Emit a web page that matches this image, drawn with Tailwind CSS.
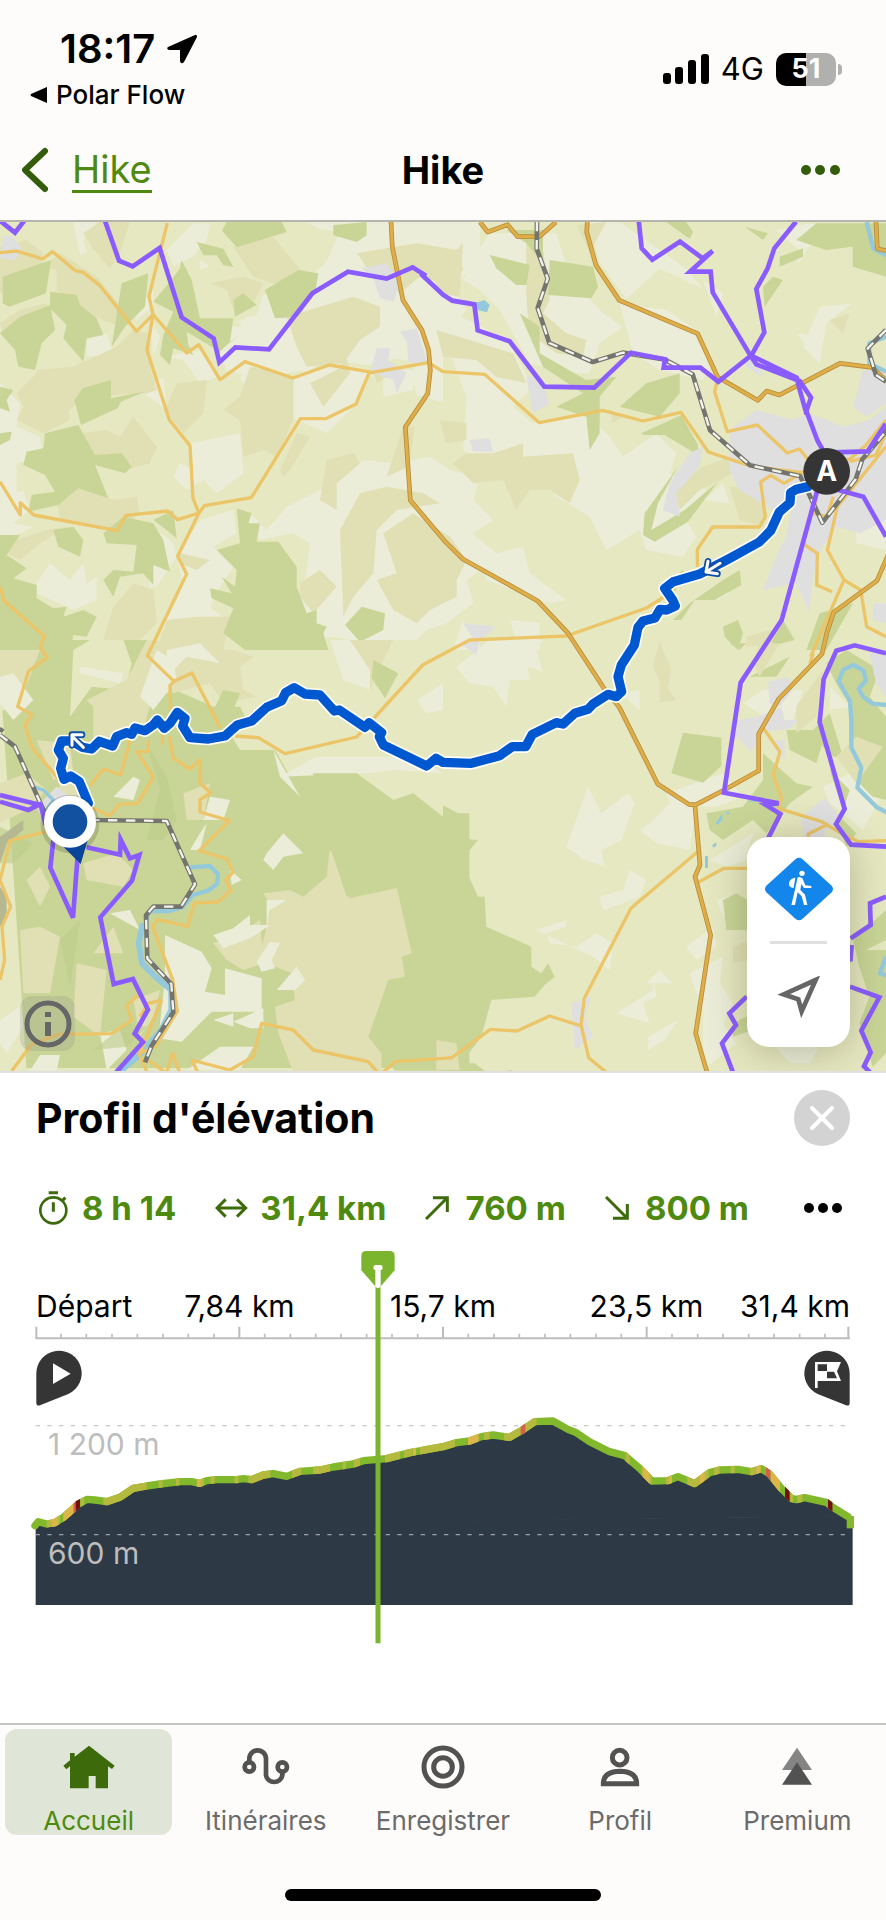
<!DOCTYPE html>
<html lang="fr">
<head>
    <meta charset="UTF-8">
    <meta name="viewport" content="width=device-width, initial-scale=1.0">
    <title>Hike</title>
    <script src="https://cdn.jsdelivr.net/npm/@tailwindcss/browser@4"></script>
</head>
<body class="bg-[#fdfcfa] font-['Inter',sans-serif] text-black">
<div class="flex min-h-screen flex-col">

    <!-- Status bar -->
    <div class="flex h-[120px] items-start justify-between pr-[44px] pl-[30px] pt-[26px]">
        <div>
            <div class="flex items-center gap-3 pl-[30px] text-[40px] leading-[46px] font-semibold">
                <span>18:17</span>
                <svg class="h-[30px] w-[30px]" viewBox="0 0 30 30"><path d="M28 1 1 13q-2 2 1 3h11v11q1 4 4 1L30 3q0-3-2-2z"/></svg>
            </div>
            <a href="#" class="flex items-center gap-2 text-[26px] leading-[46px] font-medium">
                <svg class="h-[18px] w-[18px]" viewBox="0 0 18 18"><path d="M17 1v16L1 10q-1-1 0-2z"/></svg>
                Polar Flow
            </a>
        </div>
        <div class="flex items-center gap-3 pt-[20px]">
            <svg class="h-[30px] w-[46px]" viewBox="0 0 46 30"><rect y="19" width="8" height="11" rx="3"/><rect x="12" y="13" width="8" height="17" rx="3"/><rect x="25" y="6" width="8" height="24" rx="3"/><rect x="38" width="8" height="30" rx="3"/></svg>
            <span class="text-[31px] leading-[46px]">4G</span>
            <div class="flex items-center gap-[2px]">
                <div class="flex h-[33px] w-[60px] items-center justify-center rounded-[10px] bg-linear-to-r from-black from-50% to-[#b0b0ae] to-50% text-[27px] font-bold text-white">51</div>
                <div class="h-[11px] w-[4px] rounded-r-full bg-[#b0b0ae]"></div>
            </div>
        </div>
    </div>

    <!-- Navigation bar -->
    <header class="grid h-[102px] grid-cols-3 items-center border-b-2 border-[#b5b5b0] px-[22px]">
        <a href="#" class="flex items-center gap-[23px] text-[38px] leading-[42px] text-[#4f8a10]">
            <svg class="h-[46px] w-[27px]" viewBox="0 0 27 46" fill="none" stroke="#335c0b" stroke-width="6" stroke-linecap="round" stroke-linejoin="round"><path d="M23 4 3 23l20 19"/></svg>
            <span class="border-b-3 border-[#4f8a10]">Hike</span>
        </a>
        <h1 class="text-center text-[38px] font-bold">Hike</h1>
        <button type="button" aria-label="Plus" class="justify-self-end pr-6">
            <svg class="h-[10px] w-[39px]" viewBox="0 0 39 10" fill="#335c0b"><circle cx="5" cy="5" r="5"/><circle cx="19" cy="5" r="5"/><circle cx="34" cy="5" r="5"/></svg>
        </button>
    </header>

    <!-- Map -->
    <div class="relative min-h-[640px] flex-1 overflow-hidden bg-[#e6e8c1]">
        <svg class="absolute inset-0 h-full w-full" viewBox="0 6 2658 2547" preserveAspectRatio="xMidYMid slice">
            <!-- Land cover, north west -->
            <g>
                <g fill="#ebedd8">
                    <path d="M840 6h600l0 100-80 100 40 60-71 100 0 60 0 120-80-20-10-60 10-40-60-10-90 20-120-20-60 40-50-30-70-30-30-70-60-20 60-20 20-60 100-20 90-80 40-90-60-10-80-40z"/>
                    <path d="M220 6h70l-40 50 10 40-20 10z M500 90l80-80 50 0-10 50-40 50-60 30z M600 120l30 20-30 10z M640 350l20-30h60l20-30 120 20 70 80-10 60-60 10 10 50-90-30-100-30z"/>
                    <path d="M880 470l130-40 100 20-50 110-80 80-100-45z M1150 450l100 0-10 60-90 20z M570 670l150-30 10 120-80 60-40-40-50 30-40-40 20-40 40 20z"/>
                    <path d="M0 490l60 60-10 70 70 30 10 60-80 20v90l-50 20z M260 360l60-20 20 60-80 10z M400 270l60-60 0 50-50 40z M450 300l30 50-20 60z M430 520l60-50 10 100z M490 410l120-20 40 80-50 20-50-70z"/>
                    <path d="M0 840l70-30 20 60-50 40 60 10-80 40-30-10z M110 1090l40-60 60 50 40-50 10 60 30-20v70l-70 30-110-50z M400 920l60 0 60 50 10 40-60 90-20 0-20-120z"/>
                    <path d="M600 900l100-30 10 70-70 40 60 60-40 60-30 60 70 60-60 60-60-60-100 10 70-140-20-80z"/>
                    <path d="M740 870l60 60 60-70 120-60 110-80 90 10 110-20 60 40 90 20-20 70 60 60-60 40 50 90-70 50 20 70-80 60-60 20-40 40-140 0-100-20-160 30-40-90 60-10-20-40 70-20 20-150-50-30-100 20-30-40z"/>
                    <path d="M500 1170l100 10-40 100-80-60z M740 440l30 30-20 30-30-20z"/>
                </g>
                <g fill="#e1dfb4">
                    <path d="M700 80l120-30 90 110-60 40-90-30z M630 190l100-20 60 20-30 60-60 20-20-60z M860 290l200-60 80 30 0 60-60 40-50 70-110 10-30-60z M1070 100l180-30 120 20 20 60-61 40-70-20-60 50-90-60-30-50z"/>
                    <path d="M250 40l50-34 90 0-30 90-30 50-50-60z M0 80l80-20 50 40-10 60-120 60z M130 140l50-40 110 70 90 110-20 40-100-40-90-70 0-60z M0 310l60-40 80-20 20 50-90 60-60-20z M110 450l110-10 130-60 50-50 50 10 0 100 20 70-30 10-180 10-80 60-70-60z"/>
                    <path d="M50 520l60-60 80 40 20 100-80 40-80-40 20-40z M500 560l30-70 90-10-10 100-60 60-50-60z M670 570l50-40 30-90 130 30 0 130-50 110-40-20-60 20-10-110z M930 490l80-40 30-40 10 50-80 100z"/>
                    <path d="M240 640l80-10 40 20 40-60 70 90-20 50-70 20-60-40-60-10z M170 840l70-40 100 40 70-10 10 50-60 50-180-30z M840 750l50-110 40 10-60 100-20 20z M980 720l80-20 20 30-70 60 0 80-50-30z M1080 820l80-20 110 20 50 30-130 20-60 60-10 130-60 70-30 60-10-260z"/>
                    <path d="M1150 940l90-60 110 70 50 70-30 60 0 50-80 40-40 40-70-40-50-90 60-20z M900 1090l60-40 50 50-70 80-40-50z M540 1000l90 20-40 30-50-20z M340 1160l60-70 60 20 10 100-60 60-100-10z M500 1200l90-10 100 0-20 100-200 0z M20 970l120-40 60-10-80 50-60 50-40-20z M380 440l50 0-10 40z M1160 770l50-150h35l-20 120z M230 700l40-50 0 50z M1120 440l70 10-60 40z"/>
                </g>
                <g fill="#c9d597">
                    <path d="M680 6h165l15 30-150 46-44-50z M590 66l80 20 30 55-30-5-20-30-40 0z M545 120l30 60 25 115 100 0-10 70 30-20-40 30-20 20-100-60 5 40 15 30-60-20-10 50-30-30 10-60 30-70-60-30 50-60 30-40z M365 190l80-30-10 100-60 60-40 60z M795 210l100-60 60 10-10 60-50 70-70 5z M1000 15l100-9v40l-30 20-70-20z"/>
                    <path d="M8 170l145-50-15 100-110 40-20-10z M150 215l80 10 10 30 50 40 20 50-50 10-10 70-60-70 10-40-50-50z M0 340l60-50 90-35 15 75-40 40-20 80-50-10-10-50z M223 540l25-35 85-25 0 55 100-20-70 30-10 20-110 50z M700 240l30-20 40 35-65 35z"/>
                    <path d="M135 640l100-25 50 90 80-5 30 40-20 20-90-25 40 100-90-30-60 50-90 20 10-50 70-10-30-50-65-30 10-40 50-10z M0 500l40 10-20 30 10 35-30-10z M0 640l35-5-5 25-30 15z M160 930l60-10 30 40-10 50-65-30z M310 940l60-50 90 20 30 50 20 95-50-20 0 60-30-35-70 10-20 60-30-50 30-30 60 5 10-80-90-5z M460 900l60-30 10 85-50-40z"/>
                    <path d="M0 945l60 0-40 60 60 40-40 30 70 20 0 40 50 30 40-5-10 30 60-20 40 20-30 60-40-5-10 55h-210z M710 865l45 15-10 30 35 0-10 55 65 0 55 75 0 60 30 80 30-10 0 40 30 10-10 20 15 50h-250l-65-50 30-75-65-30-5-30 65 15-30-50 40 30 5-50-60-60 70-20z M1035 1215l50-55 70 20-5 50-70 35z"/>
                </g>
                <path fill="#e0dfe0" d="M10 50l25-5 30 40-20 35-45-5z M1085 145l75-15 40 60-20 55-40-10-20-60z M1200 335l50-10 35 110-60-10-5-60z M1130 385h40l-5 35 55 40-30 60-10-40-70-25z"/>
            </g>
            <!-- Land cover, north east -->
            <g transform="translate(1329 0)">
                <g fill="#ebedd8">
                    <path d="M60 180l40-80 40-60 200 0 40 130 100 110 60 40-70 50-30 90-60 0-120-30-90-160-60-60z M440 6h90l200 140 50 60-130-60-100 90-80-110z M530 250l140 20 90 60 50 100-30 50-130-30-80-50z"/>
                    <path d="M-30 260l130 50 100 60 70 130-60 60 60 50 100-20 70 0 60 60 40 60 100-70 60 60-20 60 110 50-60 90 30 50-40 60-110-20-20-60-100 60-50-100-100-60-70-80-100 20-110-80 10-160z"/>
                    <path d="M100 950l60 50 80-20 20 80 110 80-50 10-190-70z M420 820l130 60-20 60-90-70z M780 180l60 40-20 70z M1060 340l60 10-20 40z M1000 30l100-20 60 10-80 80z M1040 100l50-10-20 40z M820 1090l40 30-40 20z M780 840l60-50 20 60z M1240 910l89-60v140l-89-20z M200 1200l90 10 0 80-60 0z M60 1200l60 90h-90z M1130 260l100-10-80 60-20 120-50-50z"/>
                </g>
                <g fill="#e1dfb4">
                    <path d="M250 60l50 30 20 150-20 40 70 60 60 20-10 50-80-10-80-60-10-100z M-30 170l50-60 40-40-10 160-60-10z M-20 330l100 30 130 40 40 90-90-20-60-50-100-10z M-10 600l80 10 0 50-60 10z M70 700l80 0 90-30 0 40 150-10 20 80-30 70-60-40-60 0-40 60-40-90-90 10-60-60z"/>
                    <path d="M690 800l90-60 80-30 10 50-100 50-60 60z M860 800l110 0-10 120-70-20z M400 15l90-9-50 90z M910 1250l110-30-10 50-100 10z M500 570l40 20-30 20z M1160 300l60-20-20 60z"/>
                </g>
                <g fill="#c9d597">
                    <path d="M320 120l130 20 15 60-20 35-130-10z M140 105l120 30-10 60-30 0-60-50z M190 30h110v100l-50-60z M230 280l60 40 0 80 140 80 90-10-50 60 0 110-30 50-10-100-90-30 80-40-120-80z M530 560l80-70 100-30 0 60-60 70z M595 640l120-55 50 90 0 30-100-60-60 0z"/>
                    <path d="M670 6h60l20 30-10 20z M905 20l70 20-15 20z M960 200l30-30 30 10-55 80z M1010 110l70-25 0 25-70 30z M1060 60l60-50 209 0v160l-100-30 0-60-80 10z M605 880l100-140-60 110-20 80 100-60 100-85-90 120-100 60-35-20z M690 1200l50-50 100-70 50-30 5 45-80 45-60 0-40 60z M840 1220l45-20 15 40-15 50-40-40z M980 1280l40-80 35 60z M1130 1180l100-30-80 140-60 0z"/>
                </g>
                <g fill="#e0dfe0">
                    <path d="M250 470l40 0 30 80-50 30z M80 660l60-5 10 40-60 0z M680 790l60-90 40-20-10 60-70 80 10 70-50-20z M885 420l70-10 0 60-30-20z"/>
                    <path d="M860 630l80-60 110 30 50-20 100 40 80-20 49-40v340l-80 40-70-20-40 60-30 90-10 110-40-90-100 20 40-100 30-60 20-110-60 30-100-60-30-60z M1230 560l30-110 69 0v100l-60 40z M60 1210l100 10-60 50z M1290 1150l39 0v60l-39-10z"/>
                </g>
                <path fill="#94c9db" d="M95 250l30-10 15 15-8 22-25-6z"/>
            </g>
            <!-- Land cover, south west -->
            <g transform="translate(0 1260)">
                <path fill="#c9d597" d="M0 100V0h440l40 130 160 70 80 130 105 0 40 70 80-10 200 10 230 120 33 0v764h-1329z"/>
                <g fill="#e6e8c1">
                    <path d="M220 30l50-30 100 0 25 70-20 80-100-10-65 90z M750 220l80-50 200 0 0-170h299v660l-90-60-60-150-50-90-180 0-110-120-80 0z"/>
                    <path d="M960 450l110 40 120-10 60 130 79 30v-300h-340z M0 130l50 50-50 40z"/>
                </g>
                <g fill="#e1dfb4">
                    <path d="M380 120l60-120 260 30 60 20-40 30 10 70 40 20-100 20-40-60-110 30-60 0-30 110-150 30 0-100-20-20z M500 0h80l60 40-60 20z M1020 0h160l-30 60-40 90-90-60z"/>
                    <path d="M0 30h120l-30 80-40 100-50-20z M110 300l100 10 10 90-60 20z M180 420l60 0-10 60-60 10z M250 670l100-30 50 50-30 50-110-20z M550 460l80-30-20 110-50 0z M230 970l90 20-20 200-80-60z"/>
                    <path d="M60 870l60-10 60 30-30 170-80 0z M80 720l40-40 30 60-30 60z M280 940l60-80 30 80z M400 1080l80-30-20 80-40 60z M790 760l80-10 40 20 70-60 10-90 50 150 150-30 45 200-30 10 10 60-50 10-70 220 50-10 0 80h-260l-50-130-10-80 60-20-10-80-100-40 40-160z M0 430l80-30 60 50-60 60-80 40z"/>
                    <path d="M640 910l60-20 80-50 10 130-60 20-50-30z M930 1100h240l-40 190h-200z"/>
                </g>
                <g fill="#ebedd8">
                    <path d="M495 885l110 50 30 50-20 70 60 10 0-80 110 30v100l-150 0-90 90-70-10 20-180z M640 885l60-20 50-40 0 30 60 0-60 40-80 30z M770 965l40-60 30 5-25 50 10 25-40 10z M830 1050l60-70 25 40-30 30z M700 1145l90-40 0 60-40 0z M560 1290l100-70 100 0-40 70z"/>
                    <path d="M800 640l50-60 60 60-60 10-30 40-30-30z M690 690l35 30-30 15z M800 780l60 0-50 30-10 60z M340 470l60-60 20 10-20 60z M820 330l80 140-60-60z M990 0h60l60 90 0 60-80-30z M1250 180l79-50v80l-50 10z M0 110l40-10 60 80-60 60-40-50z M240 80l130 20-10 30-120-30z M420 170l50-140 50 30 10 60-70 90z M500 30l100-20 60 60-100-20-60 60z M0 1140l60-40 10 60-50 80-20-30z M120 1245l60 0-10 47h-80z M330 820l60-10 30 60z M300 1180l60-10 20 60-60 60z M600 580l20-30-20 80-30 0z M630 470l60 10-20 60-60 0z M640 1140l60-20 0 40z M1160 510l25 5-10 10z"/>
                    <path d="M840 410l110-60 300 0 79 50-140-10-90 10z"/>
                </g>
                <path fill="#c9d597" d="M1120 60l75 40-40 75-40-60z M940 400l130 0 110 80 60-20 89 70v270l-60-40-60-20-160 35-35-120-30-30 30-90-80-10z M1105 1190l60-170 120 30 60 0v242h-160z M670 150l50 10-20 50-60 0z M620 200l100 0 30 60-90 10z"/>
                <g fill="#bdcb8b" opacity=".6"><path d="M440 310l60 100 30 130-40 60-50 0 40-150z M0 560l100 50-60 60-40 0z M180 900l60-60-30 200z M380 1150l60 10-60 60-100 10z"/></g>
                <path fill="#b5b890" d="M0 590l70-50 0 30-50 40-20 60z M0 740l20 30 0 60-20 30z"/>
                <path fill="#e0dfe0" d="M110 500l60-60 40 30-50 140z"/>
            </g>
            <!-- Land cover, south east -->
            <g transform="translate(1329 1260)">
                <g fill="#ebedd8">
                    <path d="M40 80l100-80 160 0-50 60 10 60-60 0-10 80-40-60-70-10z M370 620l65-180 40 80 80-60 20 30-40 110-60 30 10 50-60-20z M200 0h70l30 95-60-20z M620 550l60-60-10-30 170-60 60 70-80 30-60 0-20 130-100-20-50-40z M470 770l70-20 20-60 50 30-20 50-50 20-60 20z M280 870l90-30 0 20-60 20 10 30 80 10 60-40 50 30-10 80-50-40z"/>
                    <path d="M520 1120l110-70 0-40 10 60-40 20 20 60z M610 1030l40-40 40 40z M740 1000l100-50-10 80 40 60-30 60 40 60-100 80v-180z M615 1190l90-50-40 60-50 30z M800 660l130-80-20 80-60 20z M820 780l60-20-40 70z M900 190l60-40 120 0-30 90-70 0z M1140 440l120-60 60 80-60 110-100-80z M530 160l60-10 0 60z M1160 140l60 60-60 10z M730 920l80-60 10 60-60 40z M980 1200l80-20 100-20-60 110-60 0z"/>
                </g>
                <g fill="#c9d597">
                    <path d="M-5 575l50-10 0 30 60 5-50 60 50 110 20 0 5 90 135 60 0 60 30 20 20-30 20 40-30 25-30 35-130 10-30 110-60 80 40 0 40 30 70-10 40 40h-250z M720 278l115 15 0 85-55 50-95-28z M840 780l40-20 50 30 0 80-80 0z"/>
                    <path d="M790 520l110-20 60-80 0-80 100 90 50 10-70 50-70 90-40-40-90 60-40-30z M920 110l120-60-40 60z M1030 270l120 0-30 100-80-40z M1150 70l60-40 100 60-30 80 49 60v250l-40-10-60-60 0-200-50-80z M860 10h50l-20 20z M1100 280l60-60 40 130-30 0z M1230 900l99-90v90l-60 30 60 0v310l-40 40-40-130 30-80-30-90z M1160 390l60 60-20 60z M1180 520l60 60-30 40z M870 1150l60-30 0 50-60 20z"/>
                </g>
                <path fill="#e1dfb4" d="M650 6l35 80-10 60 25 35-50 5 0-60-20-50z M1060 200l80-110-20 140-60 50z M1180 350l60-60 80 30-80 110z M-20 1200l60 10 10 80h-70z M870 920l50-20 0 60-50 10z M950 10h60l-60 100-20-40z"/>
                <path fill="#e0dfe0" d="M975 125l60-15 15 40-40 50-30-10z M885 240l60-10 70-30 10 40 40 0-20 25-80 10-40 60-60-60z M1075 530l70-55 50 60-50 40 0 60-60-20z M1280 40l49-10v140l-30-40z M385 1090l60-20-20 60 25 60-55 40z M995 300h30v60l-30-30z M50 10l60-10-10 45z"/>
                <path fill="#94c9db" d="M818 550l20-30 0 20-15 16z M850 515l8 0 0 8-8 0z M808 615l12-8 0 10-10 6z M786 648h9v36h-9z M910 485l40-10 10 10z"/>
            </g>

            <!-- Rivers -->
            <g fill="none" stroke="#94c9db" stroke-width="13" stroke-linejoin="round">
                <path d="M2600 6l20 80 38 20M2658 350l-50 20v60l50 25"/>
                <path d="M100 1700l30 10 30 30-20 30" stroke-width="10"/>
                <path d="M570 1942l60-4 24 25-2 28-26 20-48 14-30 36-40 12-60 0-10 30"/>
                <path d="M428 2110l-12 60 10 60 40 40 48 40 0 60-30 60-65 75-60 50" stroke-width="18"/>
                <path d="M2658 1455l-40-4-28-20-14-24 22-26-8-30-30-16-30 14-14 34 34 60 4 60 0 80 30 60-12 60 60 60 48 24M2658 2210l-18 50 18 6"/>
            </g>

            <!-- Secondary roads -->
            <g fill="none" stroke="#ebc567" stroke-width="10" stroke-linejoin="round">
                <path d="M0 98l50-5 78 24 30-22 68 57 24 5 50 40 109 137 50-50-12-55 55-220M459 284l-18 106 67 210 62 77 9 158 18 45M459 284l101 115 36-25 64 105 75-54 144 49 109-39 130 22 168-29M1289 430l40 25 125 8 164 145 190-37 121 32 114-26 82 119 130 43 160 20M1108 457l-40 95-91 44-76 0-147 237-141 24-16 22-64 20-30-26-125 13-27 46-250-47-40-37v37L0 785"/>
                <path d="M597 879l-64 130 27 53-118 245 80 77 54-25 85 165M0 1100l12 42 121 107-12 32 20 32-55 40-33 107 42 24-20 30 22 70 80 95M522 1384l-12 12 2 75M705 1548l70 5 80 48 215-50 198-216 60-32 81-43 290-12 240-84 80-50 30-60"/>
                <path d="M2092 1040v-52l46-67 140 0 18-30-14-105 30-20 40 24 60-35M2152 482l-8 33 38 120 90-20 90 84 36-12 50 60M2658 600l-60 75-45 40-90 30M2658 640l-30 65-80 20M2658 680l-146 180-30 130 50 90-100 230M2532 1080l50 30 18 110 58 30M2500 830l-20 60-40-10 10-60M2408 970l44 30-2 95 46 20M2440 1300l-10 30M2290 1525l50 70-20 70 25 70-10 30 130 40 50 30 60 30 130-5M2485 1812l-60 30v40M2092 1988l80-43 80 0"/>
                <path d="M270 1697l40-50 52 18 30-110M445 1560v35h-35l50 75-47 80-55 3-30 35-55-28M487 1545v30M508 1550l12 65 50 32 30-28 0 70 32 30-32 20 0 37 88 26-90 90 83 25 18 40-22 23 16 30-38 36-72 3-20 70-90-20-15 20 60 160 14 95-65 105-50 22 30 70M0 1980l30-118 110-28M0 1980l32 80-26 60 8 100-14 60M35 2553l60-80 80-30 160-2 60-40-15-45 35-30M485 2340l-40 10-25 40M485 2340l-65 160M445 2500l0 20 55 40 18-60 22 60M575 2520l20 40M575 2520l115 30 70-40 25-100 95 20 60 60 165 35 35 40 45-40 144-10 27-2 115-85 80 5 98-45 95 30 22 95 60 50M1743 2415l10-80 140-270 200-170"/>
            </g>

            <!-- Main roads -->
            <g fill="none" stroke-linejoin="round">
                <g stroke="#b78d3c" stroke-width="14">
                    <path d="M1173 6l4 75 32 160 57 90 20 60 5 60-8 70-67 100 15 220 101 120 55 55 225 126 90 95 108 165 48 60 115 230 95 62 20 0 90-47 98-55 0-110 60-105 130-135 15-65 20-60 130-95 52-120M2085 1760l15 175-15 35 47 175-45 295 35 120"/>
                    <path d="M1440 6l23 30 60-22 30 36 65 0 50-44M1762 6l-2 30 28 100 70 105 235 100 60 130 120 70 27-28 38 12 182-95 95 12 43 38M2628 6l4 80 26 6"/>
                </g>
                <g stroke="#dfae48" stroke-width="9">
                    <path d="M1173 6l4 75 32 160 57 90 20 60 5 60-8 70-67 100 15 220 101 120 55 55 225 126 90 95 108 165 48 60 115 230 95 62 20 0 90-47 98-55 0-110 60-105 130-135 15-65 20-60 130-95 52-120M2085 1760l15 175-15 35 47 175-45 295 35 120"/>
                    <path d="M1440 6l23 30 60-22 30 36 65 0 50-44M1762 6l-2 30 28 100 70 105 235 100 60 130 120 70 27-28 38 12 182-95 95 12 43 38M2628 6l4 80 26 6"/>
                </g>
            </g>

            <!-- Railways -->
            <g fill="none" stroke="#75756f" stroke-width="14" stroke-linejoin="round">
                <path d="M1611 6l-1 80 33 90-30 88 35 105 130 57 90-28 125 20 85 45 52 168 120 105 150 32 25 50 42 90 100-130 20-60 76-90M2658 330l-55 55 25 80 30 20M0 1535l8-10M0 1545l45 35 90 200M270 1800l230 3 85 190-42 67-83 0-22 26 4 130 72 76 6 85-65 100-20 50"/>
                <g stroke="#f4f3ec" stroke-width="7" stroke-dasharray="28 26">
                    <path d="M1611 6l-1 80 33 90-30 88 35 105 130 57 90-28 125 20 85 45 52 168 120 105 150 32 25 50 42 90 100-130 20-60 76-90M2658 330l-55 55 25 80 30 20M0 1545l45 35 90 200M270 1800l230 3 85 190-42 67-83 0-22 26 4 130 72 76 6 85-65 100-20 50"/>
                </g>
            </g>

            <!-- Waymarked trails -->
            <g fill="none" stroke="#8a5cff" stroke-width="14">
                <path d="M0 2l45 36 28-36M314 0l43 122 41 17 81-55 66 208 96 63 17 72 48-45 101 6 130-168 107-65 116 21 78-34 40 25-15-5 66 62 28 18 66 11 10 78 96 33 104 136 150 3 110-105 102 20-4 25 110 0 54 42 100-80 38-68-24-130 34-62 20-60 65-80"/>
                <path d="M1916 0l9 85 32 34 83-54 68 50 30-22-68 62 62 0 6 62 111 186 20 30 130 50 34 50-14 40 34 90 20 35 130-4 54-83M2250 405l140 68 10 40 20 70M2455 800l-110 400-123 188-50 330 164 32-40 4 45 28-40 80M2515 810l75 20 68 120M2658 1300l-94-24-55 16-38 85-12 130 75 260-26 45 45 62 105 6M2658 2030l-48 20 2 65-60 40M2555 2175l-4 50M2550 2300l88 32-54 100 28 65-20 42 20 20M2240 2330l-52 50 20 35-42 55 34 90"/>
                <path d="M0 1725l100 25 22 5 15 60M0 1745l85 25 40-20M160 1860l-9 83 68 150 15-200M260 1882l100 22 2-45 28 56 28-10-22 77-95 110 40 200 58-15 45 92-40 72 25 25-80 90"/>
            </g>

            <!-- Recorded route -->
            <defs>
                <path id="route" d="M2424 800 2389 808 2372 818 2370 848 2338 876 2312 932 2278 966 2189 1015 2099 1062 2020 1085 1994 1105 2018 1140 2026 1158 2000 1170 1980 1168 1965 1194 1929 1203 1914 1222 1903 1275 1864 1335 1854 1370 1865 1415 1849 1430 1824 1423 1779 1452 1764 1468 1724 1480 1689 1512 1669 1508 1597 1543 1577 1580 1537 1580 1499 1607 1414 1630 1329 1627 1308 1615 1280 1638 1150 1575 1138 1550 1145 1538 1107 1508 1095 1522 1018 1470 1003 1473 960 1425 915 1422 883 1403 857 1418 845 1442 800 1462 755 1503 712 1515 675 1548 625 1557 570 1553 548 1518 555 1495 532 1477 510 1510 493 1525 472 1500 460 1515 435 1532 405 1524 395 1543 380 1538 350 1550 338 1578 298 1564 275 1587 248 1582 215 1563 185 1563 175 1590 190 1615 182 1645 192 1678 212 1668 238 1685 265 1750"/>
            </defs>
            <g fill="none" stroke-linejoin="round" stroke-linecap="round">
                <use href="#route" stroke="#fff" stroke-width="38"/>
                <use href="#route" stroke="#0058d0" stroke-width="28"/>
                <g stroke="#1250a8" stroke-width="20"><path d="M2160 1030l-42 26m6-32-6 32 34 5M250 1582l-34-34m30-4h-30v32"/></g>
                <g stroke="#fff" stroke-width="9"><path d="M2160 1030l-42 26m6-32-6 32 34 5M250 1582l-34-34m30-4h-30v32"/></g>
            </g>

            <!-- Start and current position -->
            <circle cx="2480" cy="754" r="70" fill="#353535"/>
            <text x="2480" y="784" text-anchor="middle" fill="#fff" font-size="84" font-weight="700">A</text>
            <circle cx="210" cy="1812" r="88" fill="#000" opacity=".15"/>
            <path fill="#0b459a" d="M190 1880l74-22-22 74z"/>
            <circle cx="210" cy="1805" r="65" fill="#1250a0" stroke="#fff" stroke-width="26"/>
        </svg>

        <button type="button" aria-label="Informations" class="absolute bottom-5 left-5 flex h-[55px] w-[55px] items-center justify-center rounded-xl bg-[#808080]/20">
            <svg class="h-[48px] w-[48px]" viewBox="0 0 48 48" fill="#666"><circle cx="24" cy="24" r="21" fill="none" stroke="#666" stroke-width="5"/><path d="M21 12h6v5h-6zM21 22h6v14h-6z"/></svg>
        </button>

        <div class="absolute right-[36px] bottom-6 flex h-[210px] w-[103px] flex-col items-center rounded-[22px] bg-white pt-[20px] shadow-[0_4px_40px_rgba(60,60,30,0.3)]">
            <button type="button" aria-label="Randonnée">
                <svg class="block h-[64px] w-[68px]" viewBox="0 0 204 192">
                    <path d="M92 6q10-8 20 0l88 80q8 10 0 20l-88 80q-10 8-20 0L4 106q-8-10 0-20z" fill="#1286ea"/>
                    <g fill="#fff"><circle cx="111" cy="49" r="8"/><path d="M98 61q8-4 15 4l8 20 18 2v6h-22l-8-12-3 18 14 14 7 31h-10l-7-26-12-12-8 38h-11l12-50zM91 62l-5 31q-16-2-14-16 4-14 19-15z"/></g>
                </svg>
            </button>
            <div class="mt-5 h-[3px] w-[57px] bg-[#e0e0e0]"></div>
            <button type="button" aria-label="Me localiser" class="mt-8">
                <svg class="block h-[43px] w-[43px]" viewBox="0 0 129 129"><path d="M116 12 20 55l44 15 10 36z" fill="none" stroke="#666" stroke-width="14"/></svg>
            </button>
        </div>
    </div>

    <!-- Elevation profile -->
    <section class="border-t-2 border-[#e0e0e0] bg-white">
        <div class="flex items-center justify-between px-[36px] pt-[17px]">
            <h2 class="text-[41px] leading-[56px] font-bold">Profil d'élévation</h2>
            <button type="button" aria-label="Fermer" class="flex h-[56px] w-[56px] items-center justify-center rounded-full bg-[#d3d3d3]">
                <svg class="h-[24px] w-[24px]" viewBox="0 0 24 24" stroke="#fff" stroke-width="4" stroke-linecap="round"><path d="M2 2l20 20M22 2 2 22"/></svg>
            </button>
        </div>

        <div class="flex items-center justify-between pt-[36px] pr-[44px] pl-[38px] text-[33px] leading-[52px] font-bold whitespace-nowrap text-[#4f8a10]">
            <div class="flex items-center gap-3">
                <svg class="h-[34px] w-[32px]" viewBox="0 0 96 102" fill="none" stroke="#3d6b0c" stroke-width="8"><circle cx="46" cy="58" r="39"/><path d="M32 5h28M46 34v28M74 28l8-8" stroke-width="9"/></svg>
                <span>8 h 14</span>
            </div>
            <div class="flex items-center gap-3">
                <svg class="h-[20px] w-[33px]" viewBox="0 0 99 60" fill="none" stroke="#3d6b0c" stroke-width="9"><path d="M6 30h86M32 4 6 30l26 26M66 4l26 26-26 26"/></svg>
                <span>31,4 km</span>
            </div>
            <div class="flex items-center gap-4">
                <svg class="h-[24px] w-[24px]" viewBox="0 0 72 72" fill="none" stroke="#3d6b0c" stroke-width="9"><path d="M3 69 66 6M24 5h43v43"/></svg>
                <span>760 m</span>
            </div>
            <div class="flex items-center gap-4">
                <svg class="h-[24px] w-[24px]" viewBox="0 0 72 72" fill="none" stroke="#3d6b0c" stroke-width="9"><path d="M3 3l63 63M24 67h43V24"/></svg>
                <span>800 m</span>
            </div>
            <button type="button" aria-label="Options" class="pl-4">
                <svg class="h-[10px] w-[38px]" viewBox="0 0 38 10"><circle cx="5" cy="5" r="5"/><circle cx="19" cy="5" r="5"/><circle cx="33" cy="5" r="5"/></svg>
            </button>
        </div>

        <div class="relative mt-[6px] h-[483px]">
            <svg class="absolute inset-x-0 top-0 h-[420px] w-full" viewBox="0 0 2658 1260">
                <defs>
                    <path id="profile" d="M105 857 115 845 140 852 165 848 190 832 210 815 235 792 262 778 285 780 320 785 360 772 400 745 440 738 480 732 540 725 575 725 600 730 620 722 650 719 710 719 730 716 755 719 790 705 820 701 860 709 900 694 960 690 1000 681 1060 672 1090 662 1160 656 1230 638 1329 620 1369 608 1409 603 1444 590 1479 585 1529 592 1564 572 1604 545 1659 543 1704 568 1729 578 1769 605 1829 635 1874 647 1919 685 1956 723 2004 722 2034 710 2084 731 2129 698 2159 690 2214 688 2254 695 2284 686 2309 702 2344 745 2374 775 2389 779 2414 773 2479 787 2499 802 2544 830"/>
                    <clipPath id="slope-olive"><path d="M140 500h40v400h-40zM242 500h10v400h-10zM310 500h130v400h-130zM476 500h12v400h-12zM528 500h10v400h-10zM590 500h22v400h-22zM632 500h12v400h-12zM704 500h12v400h-12zM745 500h66v400h-66zM876 500h28v400h-28zM940 500h50v400h-50zM1028 500h10v400h-10zM1062 500h18v400h-18zM1155 500h45v400h-45zM1212 500h24v400h-24zM1260 500h105v400h-105zM1452 500h16v400h-16zM1512 500h98v400h-98zM1877 500h12v400h-12zM1925 500h30v400h-30zM1998 500h18v400h-18zM2062 500h64v400h-64zM2142 500h16v400h-16zM2192 500h12v400h-12zM2250 500h32v400h-32zM2368 500h12v400h-12zM2392 500h16v400h-16z"/></clipPath>
                    <clipPath id="slope-amber"><path d="M155 500h18v400h-18zM190 500h40v400h-40zM592 500h10v400h-10zM1238 500h10v400h-10zM1404 500h32v400h-32zM1930 500h18v400h-18zM2008 500h8v400h-8zM2100 500h14v400h-14zM2270 500h12v400h-12zM2312 500h28v400h-28z"/></clipPath>
                    <clipPath id="slope-red"><path d="M220 500h6v400h-6zM1562 500h14v400h-14zM2298 500h14v400h-14z"/></clipPath>
                    <clipPath id="slope-dark"><path d="M226 500h14v400h-14zM2355 500h14v400h-14zM2484 500h14v400h-14z"/></clipPath>
                </defs>

                <path fill="none" stroke="#bdbdbd" stroke-width="6" d="M106 295h2444M109 260v35M718 260v35M1329 260v35M1940 260v35M2545 260v35"/>
                <path fill="none" stroke="#bdbdbd" stroke-width="5" d="M183 281v12m76-12v12m77-12v12m76-12v12m77-12v12m76-12v12m77-12v12M794 281v12m77-12v12m76-12v12m76-12v12m77-12v12m76-12v12m77-12v12M1405 281v12m77-12v12m76-12v12m77-12v12m76-12v12m77-12v12m76-12v12M2016 281v12m77-12v12m76-12v12m77-12v12m76-12v12m77-12v12m76-12v12"/>

                <path fill="#353535" d="M109 400a68 68 0 1 1 96 62l-85 34q-11 3-11-8z"/>
                <path fill="#fff" d="M159 370v62l53-31z"/>
                <path fill="#353535" d="M2549 400a68 68 0 1 0-96 62l85 34q11 3 11-8z"/>
                <path fill="#fff" fill-rule="evenodd" d="M2445 366h78l-12 28 12 29h-70v21h-8zM2453 373v20h28v-20zM2481 395v20h30l-9-20z"/>

                <path stroke="#c8c8c8" stroke-width="4" stroke-dasharray="13 22" d="M107 557h2430"/>
                <use href="#profile" fill="#2e3946"/>
                <path fill="#2e3946" d="M107 1095V855l2437-27 14 4v263z"/>
                <path stroke="#9aa0a5" stroke-width="4" stroke-dasharray="13 22" d="M107 884h2430"/>

                <g fill="none" stroke-width="22" stroke-linejoin="round">
                    <use href="#profile" stroke="#82b92c" stroke-linecap="round"/>
                    <path stroke="#82b92c" d="M2551 828v37"/>
                    <use href="#profile" stroke="#b5b93e" clip-path="url(#slope-olive)"/>
                    <use href="#profile" stroke="#dbb74a" clip-path="url(#slope-amber)"/>
                    <use href="#profile" stroke="#d8604a" clip-path="url(#slope-red)"/>
                    <use href="#profile" stroke="#74100f" clip-path="url(#slope-dark)"/>
                </g>

                <path stroke="#7ab52d" stroke-width="15" d="M1134 140v1070"/>
                <path fill="#7ab52d" d="M1084 48q0-15 15-15h70q15 0 15 15v43l-43 49h-14l-43-49z"/>
                <path fill="#fff" d="M1126 75h16q6 1 6 8t-6 7v50q-8 8-16 0V90q-6 0-6-7t6-8z"/>
                <g font-size="90" fill="#bdbdbd">
                    <text x="144" y="645">1 200 m</text>
                    <text x="144" y="971">600 m</text>
                </g>
            </svg>
            <div class="relative grid grid-cols-[minmax(0,1fr)_minmax(0,2fr)_minmax(0,2fr)_minmax(0,2fr)_minmax(0,1fr)] px-[36px] pt-[46px] text-[30px] leading-[40px] whitespace-nowrap">
                <span>Départ</span>
                <span class="justify-self-center">7,84 km</span>
                <span class="justify-self-center">15,7 km</span>
                <span class="justify-self-center">23,5 km</span>
                <span class="justify-self-end">31,4 km</span>
            </div>
        </div>
    </section>

    <!-- Tab bar -->
    <nav class="border-t-2 border-[#c4c4c2] pt-[4px] pb-[19px]">
        <div class="grid grid-cols-5 text-center text-[26px] leading-[32px] text-[#6b6b6b]">
            <a href="#" class="mx-[5px] flex h-[106px] flex-col items-center gap-4 rounded-xl bg-[#dfe6d7] pt-[16px] text-[#4f8a10]">
                <svg class="h-[44px] w-[52px] shrink-0" viewBox="67 27 156 132" fill="#3d6b0c"><path d="M145 29l77 60-8 10-12-8v66h-37v-37h-21v37H88V91l-11 9-9-11 20-16V51h14v11z"/></svg>
                Accueil
            </a>
            <a href="#" class="mx-[5px] flex h-[106px] flex-col items-center gap-4 pt-[16px]">
                <svg class="h-[44px] w-[52px] shrink-0" viewBox="596 27 156 132" fill="none" stroke="#525252" stroke-width="14"><circle cx="624" cy="93" r="14"/><circle cx="723" cy="93" r="14"/><path d="M624 80V68a25 25 0 0 1 50 0v50a25 25 0 0 0 49 0v-14"/></svg>
                Itinéraires
            </a>
            <a href="#" class="mx-[5px] flex h-[106px] flex-col items-center gap-4 pt-[16px]">
                <svg class="h-[44px] w-[52px] shrink-0" viewBox="5 27 156 132" fill="none" stroke="#525252" stroke-width="15"><circle cx="83" cy="93" r="57"/><circle cx="83" cy="93" r="28"/></svg>
                Enregistrer
            </a>
            <a href="#" class="mx-[5px] flex h-[106px] flex-col items-center gap-4 pt-[16px]">
                <svg class="h-[44px] w-[52px] shrink-0" viewBox="537 27 156 132" fill="none" stroke="#525252" stroke-width="15"><circle cx="614" cy="65" r="22"/><path d="M565 143q0-36 50-37 50 1 50 37z"/></svg>
                Profil
            </a>
            <a href="#" class="mx-[5px] flex h-[106px] flex-col items-center gap-4 pt-[16px]">
                <svg class="h-[44px] w-[52px] shrink-0" viewBox="1068 27 156 132"><path fill="#848484" d="M1146 35l45 67h-90z"/><path fill="#525252" d="M1146 79l45 67h-90z"/></svg>
                Premium
            </a>
        </div>
        <div class="mx-auto mt-[54px] h-[12px] w-[316px] rounded-full bg-black"></div>
    </nav>
</div>
</body>
</html>
